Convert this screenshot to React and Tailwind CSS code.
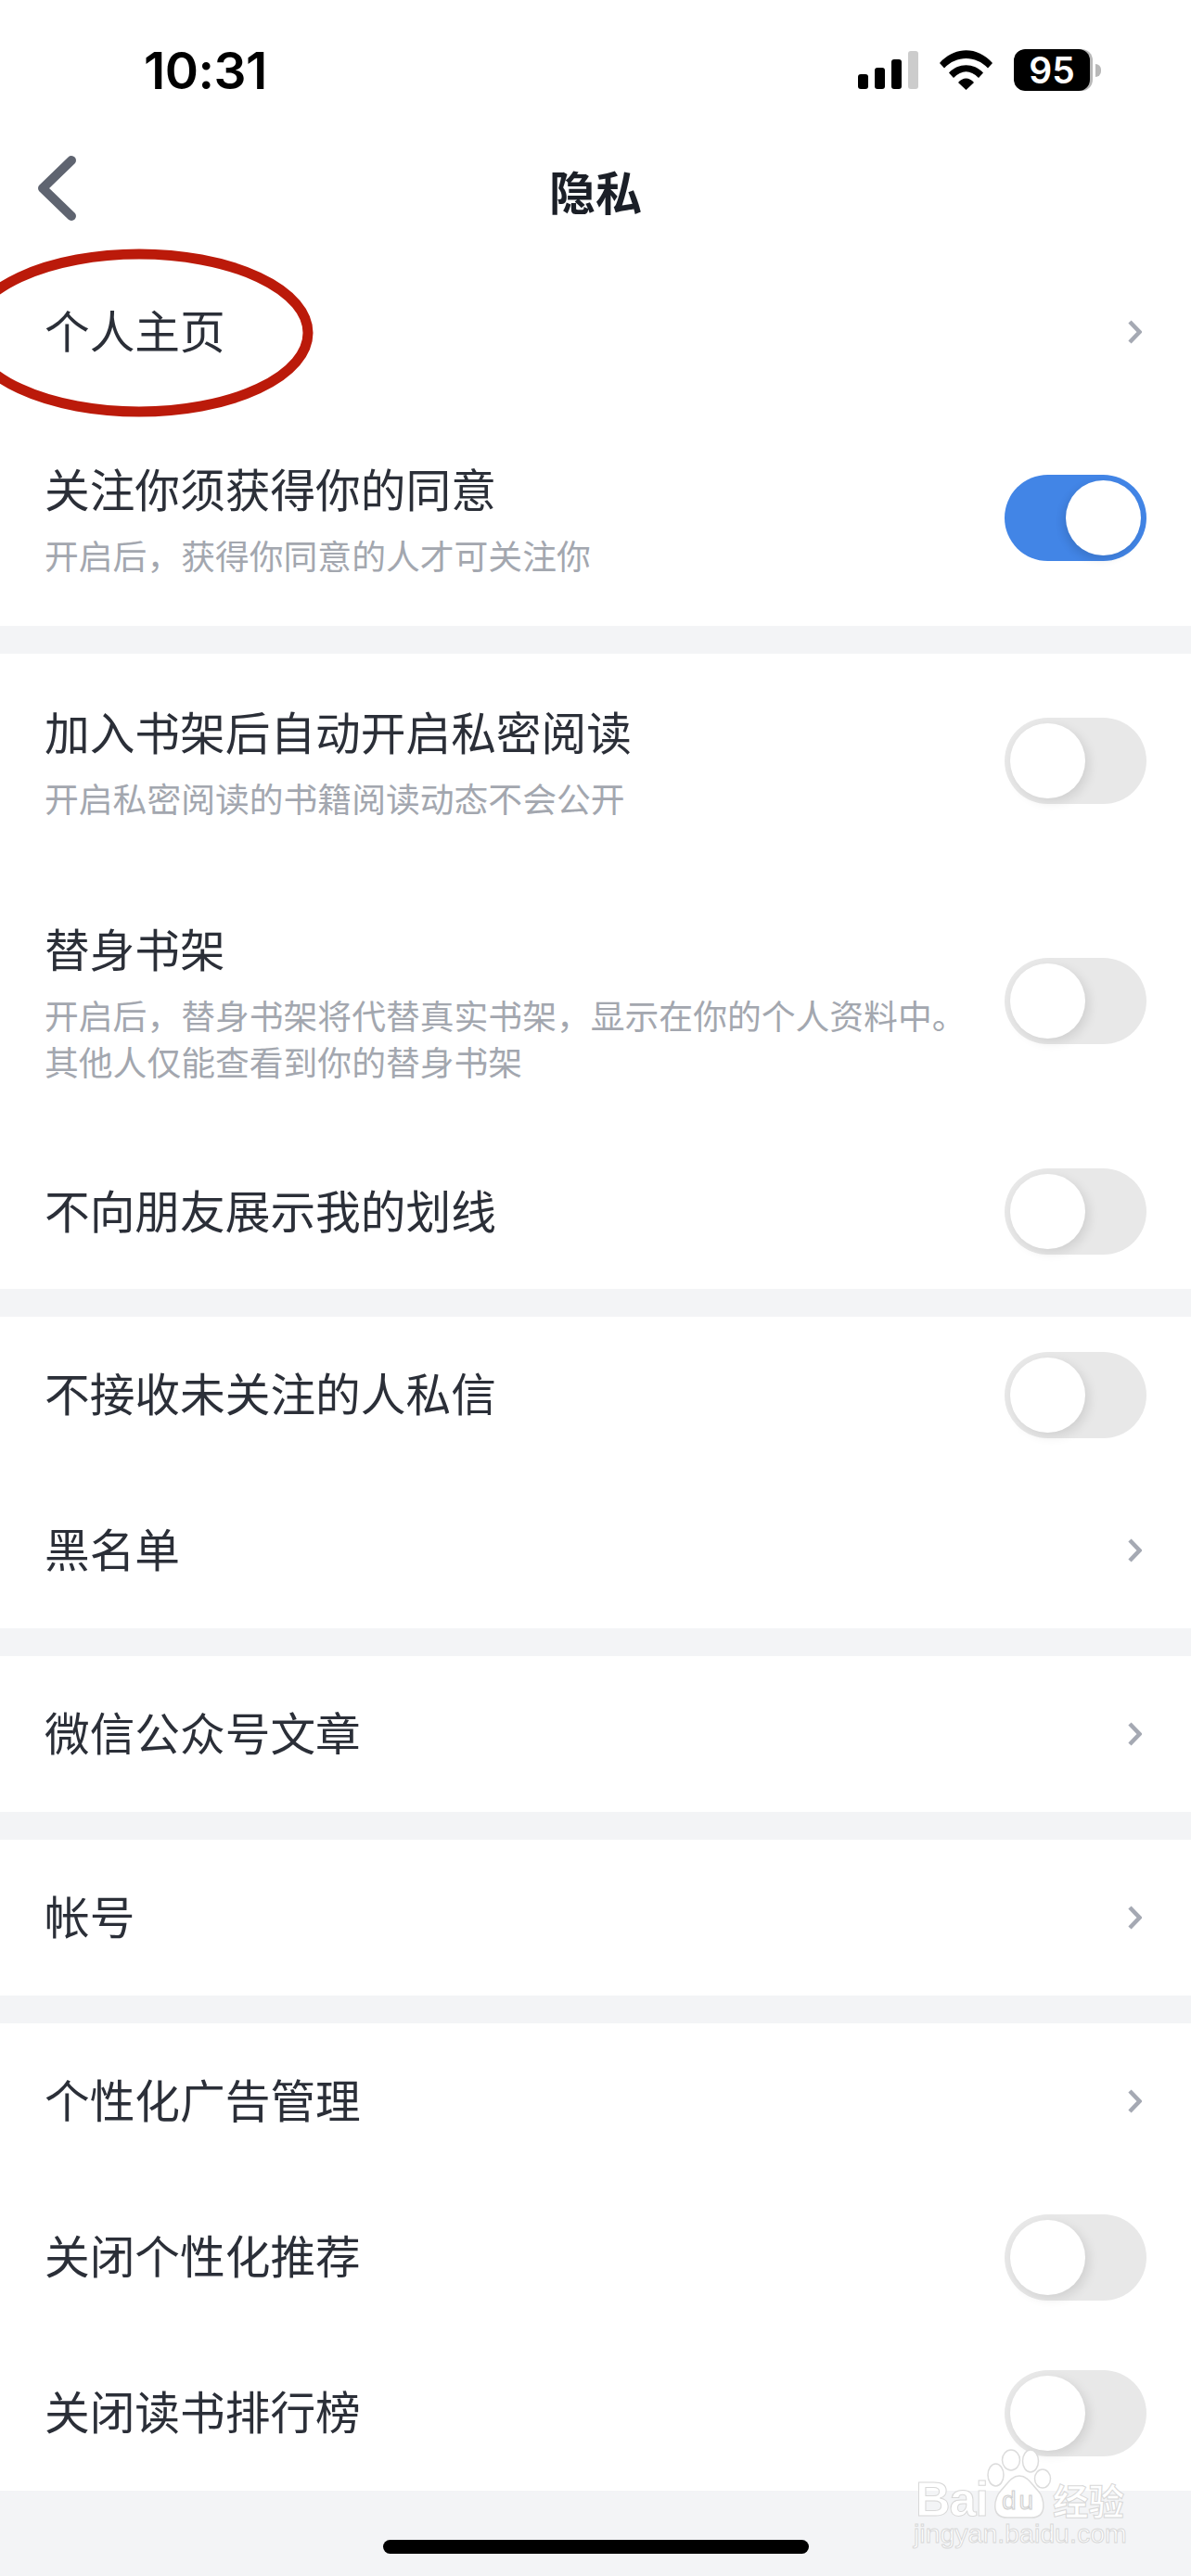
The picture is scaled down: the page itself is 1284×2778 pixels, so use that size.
const cjk = "font-['Noto_Sans_CJK_SC','Noto_Sans',sans-serif]";

function Toggle({ on }) {
  return (
    <div
      className={`relative h-[93px] w-[153px] shrink-0 rounded-full ${on ? "bg-[#4285e6]" : "bg-[#e8e8e8]"}`}
    >
      <div
        className={`absolute top-[6px] h-[81px] w-[81px] rounded-full bg-white ${
          on
            ? "right-[6px] shadow-[-3px_4px_10px_rgba(0,0,0,0.12)]"
            : "left-[6px] shadow-[4px_4px_12px_rgba(0,0,0,0.1)]"
        }`}
      />
    </div>
  );
}

function Arrow() {
  return (
    <svg width="15" height="26" viewBox="0 0 15 26" fill="none" className="mr-[5px] shrink-0">
      <path d="M2 2L12.5 13L2 24" stroke="#a5a9b3" strokeWidth="4.5" />
    </svg>
  );
}

function Row({ title, sub, toggle, on, h = "h-[168px]" }) {
  return (
    <div className={`flex items-center justify-between px-[48px] ${h}`}>
      <div className={`min-w-0 ${sub ? "" : "pb-[6px]"}`}>
        <div className="text-[48.700px] leading-[64px] text-[#2b2f38]">{title}</div>
        {sub && (
          <div className="mt-[15px] text-[36.800px] leading-[50px] text-[#a3a7af]">
            {sub.map((line) => (
              <div key={line}>{line}</div>
            ))}
          </div>
        )}
      </div>
      {toggle ? <Toggle on={on} /> : <Arrow />}
    </div>
  );
}

function Band() {
  return <div className="h-[30px] bg-[#f3f4f6]" />;
}

function StatusBar() {
  return (
    <div className="flex h-[150px] items-start justify-between font-['Inter',sans-serif]">
      <div className="ml-[155px] mt-[46px] text-[55px] font-semibold leading-[60px] tracking-[-0.5px] text-black">
        10:31
      </div>
      <div className="mr-[97px] mt-[53px] flex items-start">
        <div className="mt-[2px] flex h-[41px] items-end gap-[7px]">
          <div className="h-[16px] w-[11px] rounded-[3px] bg-black" />
          <div className="h-[23px] w-[11px] rounded-[3px] bg-black" />
          <div className="h-[32px] w-[11px] rounded-[3px] bg-black" />
          <div className="h-[41px] w-[11px] rounded-[3px] bg-[#cccccc]" />
        </div>
        <svg width="57" height="43" viewBox="0 0 57 43" className="ml-[23px] mt-[1px]">
          <path
            d="M0 14C16-4.500 41-4.500 57 14L52 19.500C39 5.500 18 5.500 5 19.500Z"
            fill="black"
          />
          <path d="M10 24.500C20 13.500 37 13.500 47 24.500L42 30C33 21 24 21 15 30Z" fill="black" />
          <path d="M20 35C25 29 32 29 37 35L28.500 43Z" fill="black" />
        </svg>
        <div className="ml-[23px] flex items-center">
          <div className="relative h-[45px] w-[85px] overflow-hidden rounded-[12px] bg-[#b8b8b8]">
            <div className="flex h-full w-[82px] items-center justify-center rounded-[12px] bg-black text-[39px] font-semibold leading-none text-white">
              95
            </div>
          </div>
          <div className="ml-[3px] h-[14px] w-[6px] rounded-r-full bg-[#b8b8b8]" />
        </div>
      </div>
    </div>
  );
}

function NavBar() {
  return (
    <div className="relative flex h-[124px] items-center justify-center">
      <svg
        width="41"
        height="70"
        viewBox="0 0 41 70"
        fill="none"
        className="absolute left-[41px] top-[18px]"
      >
        <path
          d="M36 5L5 35L36 65"
          stroke="#5f6470"
          strokeWidth="10"
          strokeLinecap="round"
          strokeLinejoin="round"
        />
      </svg>
      <div className="mt-[-14px] text-[50px] font-bold leading-[64px] text-[#1b1f27]">隐私</div>
    </div>
  );
}

function Watermark() {
  return (
    <div className="pointer-events-none absolute left-[985px] top-[2640px] h-[112px] w-[232px] text-white">
      <svg
        width="70"
        height="76"
        viewBox="0 0 70 76"
        fill="#ffffff"
        stroke="#dcdcdc"
        strokeWidth="1.5"
        className="absolute left-[79px] top-[1px]"
      >
        <ellipse cx="9.500" cy="28" rx="8.500" ry="12" />
        <ellipse cx="26" cy="12" rx="9.500" ry="11" />
        <ellipse cx="47" cy="13" rx="8.500" ry="12" />
        <ellipse cx="60" cy="32" rx="8.500" ry="10" />
        <path d="M35 29C26 29 22 38 15 45C8 52 3 74 22 74L48 74C66 74 62 52 55 45C48 38 44 29 35 29Z" />
      </svg>
      <div className="absolute left-[2px] top-[33px] font-['Liberation_Sans',sans-serif] text-[52px] font-bold leading-[44px] tracking-[-1px] [-webkit-text-stroke:1px_#d8d8d8]">
        Bai
      </div>
      <div className="absolute left-[95px] top-[43px] font-['Liberation_Sans',sans-serif] text-[28px] leading-[28px] tracking-[3px] text-[#f3f4f6] [-webkit-text-stroke:1px_#cfcfcf]">
        du
      </div>
      <div
        className={`absolute left-[150px] top-[33px] text-[38.500px] font-bold leading-[44px] [-webkit-text-stroke:1px_#d8d8d8] ${cjk}`}
      >
        经验
      </div>
      <div className="absolute left-0 top-[77px] whitespace-nowrap font-['Liberation_Sans',sans-serif] text-[28.500px] leading-[30px] [-webkit-text-stroke:1px_#d8d8d8]">
        jingyan.baidu.com
      </div>
    </div>
  );
}

export default function App() {
  return (
    <div className={`relative h-[2778px] w-[1284px] overflow-hidden bg-[#f3f4f6] ${cjk}`}>
      <div className="bg-white">
        <StatusBar />
        <NavBar />
        <Row title="个人主页" />
        <Row title="关注你须获得你的同意" sub={["开启后，获得你同意的人才可关注你"]} toggle on h="h-[233px]" />
      </div>
      <Band />
      <div className="bg-white">
        <Row title="加入书架后自动开启私密阅读" sub={["开启私密阅读的书籍阅读动态不会公开"]} toggle h="h-[230px]" />
        <Row
          title="替身书架"
          sub={["开启后，替身书架将代替真实书架，显示在你的个人资料中。", "其他人仅能查看到你的替身书架"]}
          toggle
          h="h-[288px]"
        />
        <Row title="不向朋友展示我的划线" toggle h="h-[167px]" />
      </div>
      <Band />
      <div className="bg-white">
        <Row title="不接收未关注的人私信" toggle />
        <Row title="黑名单" />
      </div>
      <Band />
      <div className="bg-white">
        <Row title="微信公众号文章" />
      </div>
      <Band />
      <div className="bg-white">
        <Row title="帐号" />
      </div>
      <Band />
      <div className="bg-white">
        <Row title="个性化广告管理" />
        <Row title="关闭个性化推荐" toggle />
        <Row title="关闭读书排行榜" toggle />
      </div>

      {/* red hand-drawn annotation round the first row */}
      <svg
        width="340"
        height="184"
        viewBox="0 0 340 184"
        fill="none"
        className="absolute left-0 top-[267px]"
      >
        <ellipse cx="150" cy="92" rx="182" ry="85" stroke="#bb1a0a" strokeWidth="11" />
      </svg>

      <Watermark />

      <div className="absolute left-[413px] top-[2739px] h-[15px] w-[459px] rounded-full bg-black" />
    </div>
  );
}
